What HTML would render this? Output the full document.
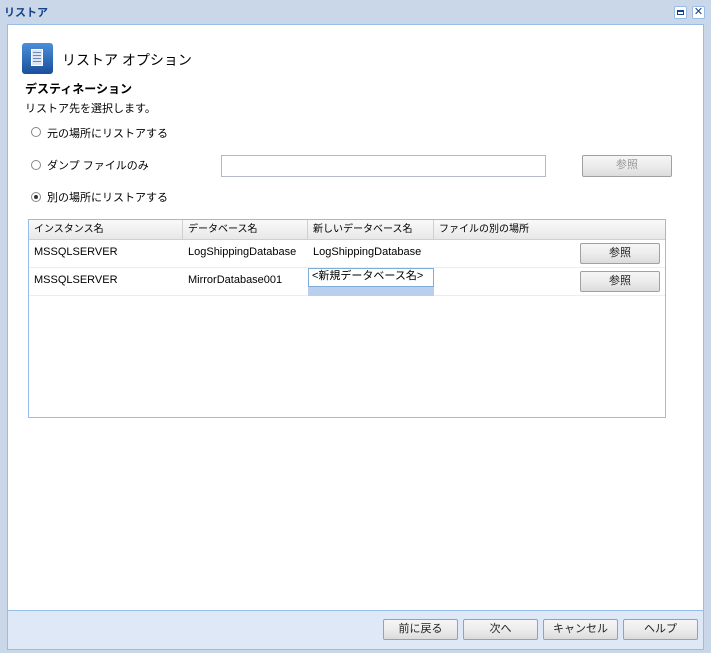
<!DOCTYPE html><html><head><meta charset="utf-8"><style>
*{box-sizing:border-box}
body{margin:0;width:711px;height:653px;background:#c9d7e8;font-family:"Liberation Sans","Noto Sans CJK JP",sans-serif;font-size:11px;color:#000;position:relative;overflow:hidden}
.abs{position:absolute}
.title{left:4px;top:4px;font-weight:bold;color:#15428b;font-size:11px}
.content{left:7px;top:24px;width:697px;height:587px;background:#fff;border:1px solid #99bbe8}
.footer{left:7px;top:611px;width:697px;height:39px;background:#dfe8f6;border:1px solid #99bbe8;border-top:none}
.btn{position:absolute;height:21px;border:1px solid #a0a0a0;border-radius:2px;background:linear-gradient(#f6f6f6 0,#ececec 50%,#dcdcdc 100%);text-align:center;line-height:19px;font-size:11px;color:#222}
.radio{position:absolute;width:10px;height:10px;border:1px solid #888;border-radius:50%;background:#fff}
.grid{left:28px;top:219px;width:638px;height:199px;border:1px solid #99bbe8}
.hdr{position:absolute;left:0;top:0;width:636px;height:20px;background:linear-gradient(#f9f9f9,#e8e8e8);border-bottom:1px solid #d0d0d0}
.hc{position:absolute;top:0;height:20px;line-height:19px;padding-left:5px;border-right:1px solid #d0d0d0;font-size:10px}
.row{position:absolute;left:0;width:636px;height:28px;border-bottom:1px solid #ededed}
.c{position:absolute;top:0;line-height:25px;padding-left:5px}
.tb{position:absolute;border:1px solid #b5b8c8;background:#fff}
.wb{position:absolute;width:13px;height:13px;border:1px solid #99bbe8;border-radius:2px;background:#fff}
</style></head><body>
<div class="abs title">リストア</div>
<div class="wb" style="left:674px;top:6px"><div style="position:absolute;left:2px;top:3px;width:7px;height:5px;border:1px solid #15428b;border-top-width:2px"></div></div>
<div class="wb" style="left:692px;top:6px;color:#15428b;font-size:11px;line-height:11px;text-align:center">✕</div>
<div class="abs content"></div>
<div class="abs" style="left:22px;top:43px;width:31px;height:31px;border-radius:3px;background:linear-gradient(#4a8fd8,#1a4f9c)">
<div style="position:absolute;left:9px;top:6px;width:12px;height:17px;background:#dde6f2;border:1px solid #fff"></div>
<div style="position:absolute;left:11px;top:9px;width:8px;height:10px;background:repeating-linear-gradient(#6a88b0 0 1px,transparent 1px 3px)"></div></div>
<div class="abs" style="left:62px;top:50px;font-size:14px">リストア オプション</div>
<div class="abs" style="left:25px;top:80px;font-weight:bold;font-size:12px">デスティネーション</div>
<div class="abs" style="left:25px;top:100px">リストア先を選択します。</div>
<div class="radio" style="left:31px;top:127px"></div><div class="abs" style="left:47px;top:125px">元の場所にリストアする</div>
<div class="radio" style="left:31px;top:160px"></div><div class="abs" style="left:47px;top:157px">ダンプ ファイルのみ</div>
<div class="tb" style="left:221px;top:155px;width:325px;height:22px"></div>
<div class="btn" style="left:582px;top:155px;width:90px;height:22px;color:#999">参照</div>
<div class="radio" style="left:31px;top:192px"><div style="position:absolute;left:2px;top:2px;width:4px;height:4px;border-radius:50%;background:#333"></div></div><div class="abs" style="left:47px;top:189px">別の場所にリストアする</div>
<div class="abs grid">
<div class="hdr">
<div class="hc" style="left:0;width:154px">インスタンス名</div>
<div class="hc" style="left:154px;width:125px">データベース名</div>
<div class="hc" style="left:279px;width:126px">新しいデータベース名</div>
<div class="hc" style="left:405px;width:231px;border-right:none">ファイルの別の場所</div>
</div>
<div class="row" style="top:20px"><div class="c" style="left:0">MSSQLSERVER</div><div class="c" style="left:154px">LogShippingDatabase</div><div class="c" style="left:279px">LogShippingDatabase</div><div class="btn" style="left:551px;top:3px;width:80px">参照</div></div>
<div class="row" style="top:48px"><div class="c" style="left:0">MSSQLSERVER</div><div class="c" style="left:154px">MirrorDatabase001</div>
<div style="position:absolute;left:279px;top:0;width:126px;height:28px;background:#b9cfee"></div>
<div style="position:absolute;left:279px;top:0;width:126px;height:19px;background:#fff;border:1px solid #7eadd9;line-height:15px;padding-left:3px">&lt;新規データベース名&gt;</div>
<div class="btn" style="left:551px;top:3px;width:80px">参照</div></div>
</div>
<div class="abs footer"></div>
<div class="btn" style="left:383px;top:619px;width:75px">前に戻る</div>
<div class="btn" style="left:463px;top:619px;width:75px">次へ</div>
<div class="btn" style="left:543px;top:619px;width:75px">キャンセル</div>
<div class="btn" style="left:623px;top:619px;width:75px">ヘルプ</div>
</body></html>
